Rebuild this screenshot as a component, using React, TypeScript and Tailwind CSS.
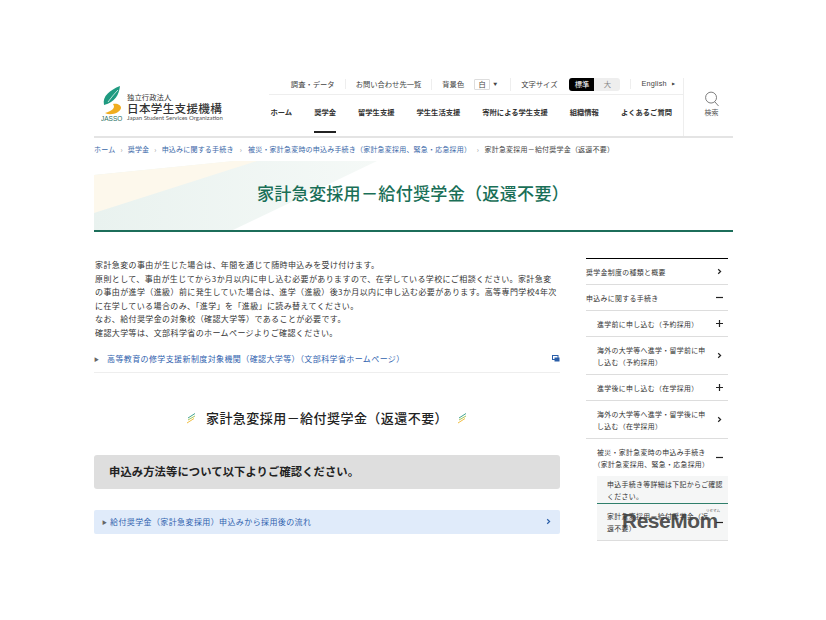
import React from "react";

const FONT = { fontFamily: '"Noto Sans CJK JP", "Noto Sans", sans-serif' };

const navItems = ["ホーム", "奨学金", "留学生支援", "学生生活支援", "寄附による学生支援", "組織情報", "よくあるご質問"];

const Chevron = ({ className = "" }: { className?: string }) => (
  <svg width="7" height="7" viewBox="0 0 7 7" className={className}>
    <path d="M2.2 1.2 L4.6 3.5 L2.2 5.8" fill="none" stroke="currentColor" strokeWidth="1.2" />
  </svg>
);

const Plus = () => (
  <svg width="7" height="7" viewBox="0 0 7 7">
    <path d="M0 3.5 H7 M3.5 0 V7" stroke="#222" strokeWidth="1.2" />
  </svg>
);

const Minus = () => (
  <svg width="7" height="7" viewBox="0 0 7 7">
    <path d="M0 3.5 H7" stroke="#222" strokeWidth="1.2" />
  </svg>
);

const Slash = () => (
  <svg width="11" height="12" viewBox="0 0 11 12">
    <path d="M2 6 L9 1.5" stroke="#2f9a86" strokeWidth="0.9" />
    <path d="M2 8 L9 4" stroke="#9cc04a" strokeWidth="0.9" />
    <path d="M1 11 L8 6.5" stroke="#efb52c" strokeWidth="0.9" />
  </svg>
);

const Logo = () => (
  <svg width="24" height="36" viewBox="0 0 24 36">
    <path d="M3 19 C1 10 9 4 19 0 C18 9 14 16 3 19 Z" fill="#1f9a80" />
    <path d="M7 16 C10 12 13 8 17 4" stroke="#fff" strokeWidth="0.7" fill="none" />
    <path d="M12 18 C15 22 11 25 4 27 C10 30 19 27 20 22 C20 19 16 17 12 18 Z" fill="#f0ad1f" />
    <text x="0" y="35" fontSize="6.5" fill="#2a6f62" fontFamily="Liberation Sans, sans-serif">JASSO</text>
  </svg>
);

const SideRow = ({
  text,
  icon,
  indent = false,
}: {
  text: React.ReactNode;
  icon: React.ReactNode;
  indent?: boolean;
}) => (
  <div
    className={`flex items-center justify-between border-b border-[#ddd] py-[6.5px] pr-[5px] text-[6.9px] leading-[12px] tracking-[0.35px] text-[#333] ${
      indent ? "pl-[11px]" : ""
    }`}
  >
    <div className="w-[112px]">{text}</div>
    {icon}
  </div>
);

export default function App() {
  return (
    <div className="h-[620px] w-[826px] overflow-hidden bg-white pt-[78px]" style={FONT}>
      <div className="ml-[94px] w-[639px]">
        {/* header */}
        <header className="flex h-[58px]">
          <div className="flex w-[175px] items-start pl-[7px] pt-[8px]">
            <Logo />
            <div className="ml-[2px] pt-[6px]">
              <div className="text-[7.4px] leading-[10px] text-[#333]">独立行政法人</div>
              <div className="text-[11.6px] font-medium leading-[12px] tracking-[0.3px] text-[#333]">日本学生支援機構</div>
              <div className="whitespace-nowrap text-[6px] leading-[8px] text-[#555]" style={{ fontFamily: '"Lato", sans-serif' }}>
                Japan Student Services Organization
              </div>
            </div>
          </div>
          <div className="flex w-[414px] flex-col">
            <div className="flex h-[17px] items-center justify-end border-b border-[#eee] pb-[4px] text-[7.3px] text-[#444]">
              <span className="whitespace-nowrap pr-[10px]">調査・データ</span>
              <span className="whitespace-nowrap border-l border-[#eee] pl-[10px] pr-[10px]">お問い合わせ先一覧</span>
              <div className="flex items-center whitespace-nowrap border-l border-[#eee] pl-[10px] pr-[13px]">
                背景色
                <span className="ml-[10px] flex h-[11px] w-[16px] items-center justify-center rounded-[1px] border border-[#ddd]">白</span>
                <span className="ml-[3px] text-[4px]">▼</span>
              </div>
              <div className="flex items-center whitespace-nowrap border-l border-[#eee] pl-[10px] pr-[10px]">
                文字サイズ
                <span className="ml-[12px] flex h-[13px] w-[25px] items-center justify-center rounded-l-[3px] bg-black text-white">標準</span>
                <span className="flex h-[13px] w-[26px] items-center justify-center rounded-r-[3px] bg-[#eee] text-[#888]">大</span>
              </div>
              <span
                className="flex items-center whitespace-nowrap border-l border-[#eee] pl-[10px] pr-[8px] tracking-[0.2px]"
                style={{ fontFamily: '"Liberation Sans", sans-serif' }}
              >
                English<span className="ml-[5px] text-[4px]">▶</span>
              </span>
            </div>
            <nav className="flex flex-1 items-stretch justify-end gap-[22px] pr-[11px]">
              {navItems.map((item, i) => (
                <div
                  key={item}
                  className={`mb-[3px] flex items-center whitespace-nowrap border-b-2 pb-[1px] text-[7.3px] font-bold text-[#333] ${
                    i === 1 ? "border-[#222]" : "border-transparent"
                  }`}
                >
                  {item}
                </div>
              ))}
            </nav>
          </div>
          <div className="flex w-[50px] flex-col items-center border-l border-[#eee] pl-[6px] pt-[13px]">
            <svg width="16" height="16" viewBox="0 0 16 17">
              <circle cx="7" cy="7" r="5.8" fill="none" stroke="#666" strokeWidth="0.9" />
              <path d="M11 11.5 L15 16" stroke="#666" strokeWidth="0.9" />
            </svg>
            <span className="text-[7px] leading-[10px] text-[#555]">検索</span>
          </div>
        </header>
        <div className="h-[2px] w-[639px] bg-[#e4e4e4]" />

        {/* breadcrumb */}
        <div className="flex h-[23px] items-center whitespace-nowrap text-[7px] tracking-[0.2px] text-[#3a68a8]">
          <span>ホーム</span>
          <span className="mx-[5px] text-[#999]">›</span>
          <span>奨学金</span>
          <span className="mx-[5px] text-[#999]">›</span>
          <span>申込みに関する手続き</span>
          <span className="mx-[6px] text-[#999]">›</span>
          <span>被災・家計急変時の申込み手続き（家計急変採用、緊急・応急採用）</span>
          <span className="mx-[5.5px] text-[#999]">›</span>
          <span className="text-[#444]">家計急変採用－給付奨学金（返還不要）</span>
        </div>

        {/* hero */}
        <div className="relative flex h-[71px] items-center justify-center border-b-2 border-[#1c6e5a]">
          <svg className="absolute inset-0" width="639" height="69" viewBox="0 0 639 69">
            <defs>
              <linearGradient id="heroFade" x1="0" y1="0" x2="1" y2="0">
                <stop offset="0" stopColor="#e9f2ef" />
                <stop offset="1" stopColor="#f5f9f7" />
              </linearGradient>
            </defs>
            <polygon points="0,0 283,0 139,69 0,69" fill="url(#heroFade)" />
            <polygon points="0,14 140,0 0,0" fill="#fff" />
            <polygon points="0,14 140,0 163,0 0,52" fill="#fdf8ec" />
          </svg>
          <h1 className="relative pb-[5px] pr-[1px] text-[17.1px] font-medium tracking-[0.25px] text-[#1a6f57]">家計急変採用－給付奨学金（返還不要）</h1>
        </div>

        {/* content */}
        <div className="mt-[26px] flex items-start justify-between pr-[5px]">
          <main className="w-[466px]">
            <p className="pl-[1px] pr-[2px] text-[8px] leading-[13.6px] tracking-[0.39px] text-[#333]">
              家計急変の事由が生じた場合は、年間を通じて随時申込みを受け付けます。
              <br />
              原則として、事由が生じてから3か月以内に申し込む必要がありますので、在学している学校にご相談ください。家計急変の事由が進学（進級）前に発生していた場合は、進学（進級）後3か月以内に申し込む必要があります。高等専門学校4年次に在学している場合のみ、「進学」を「進級」に読み替えてください。
              <br />
              なお、給付奨学金の対象校（確認大学等）であることが必要です。
              <br />
              確認大学等は、文部科学省のホームページよりご確認ください。
            </p>

            <div className="mt-[8px] flex h-[25px] items-center justify-between border-b border-[#eee] pb-[2px] text-[8px] tracking-[0.39px] text-[#2f62ae]">
              <div className="flex items-center">
                <span className="w-[13px] text-[5px] text-[#666]">▶</span>
                <span>高等教育の修学支援新制度対象機関（確認大学等）（文部科学省ホームページ）</span>
              </div>
              <svg width="8" height="7" viewBox="0 0 8 7">
                <rect x="0.5" y="0.5" width="5.5" height="4" fill="none" stroke="#2a5ea8" />
                <rect x="2.5" y="2.5" width="5" height="4" fill="#2a5ea8" />
              </svg>
            </div>

            <div className="mt-[35px] flex items-center justify-center gap-[9px]">
              <Slash />
              <h2 className="text-[13px] font-medium leading-[20px] tracking-[0.45px] text-[#222]">家計急変採用－給付奨学金（返還不要）</h2>
              <Slash />
            </div>

            <div className="mt-[27px] flex h-[34px] items-center rounded-[3px] bg-[#dedede] pl-[15px] text-[11.3px] font-bold tracking-[0.1px] text-[#222]">
              申込み方法等について以下よりご確認ください。
            </div>

            <div className="mt-[21px] flex h-[24px] items-center justify-between rounded-[2px] bg-[#e0ebfa] px-[8px] text-[8px] tracking-[0.39px] text-[#2f62ae]">
              <div className="flex items-center">
                <span className="w-[8px] text-[5px] text-[#666]">▶</span>
                <span>給付奨学金（家計急変採用）申込みから採用後の流れ</span>
              </div>
              <Chevron className="text-[#2a5ea8]" />
            </div>
          </main>

          {/* side menu */}
          <aside className="relative h-[283px] w-[142px] overflow-hidden border-t border-black">
            <SideRow text="奨学金制度の種類と概要" icon={<Chevron className="text-[#222]" />} />
            <SideRow text="申込みに関する手続き" icon={<Minus />} />
            <SideRow indent text="進学前に申し込む（予約採用）" icon={<Plus />} />
            <SideRow indent text="海外の大学等へ進学・留学前に申し込む（予約採用）" icon={<Chevron className="text-[#222]" />} />
            <SideRow indent text="進学後に申し込む（在学採用）" icon={<Plus />} />
            <SideRow indent text="海外の大学等へ進学・留学後に申し込む（在学採用）" icon={<Chevron className="text-[#222]" />} />
            <div className="flex items-center justify-between py-[6.5px] pl-[11px] pr-[5px] text-[6.9px] leading-[12px] tracking-[0.35px] text-[#333]">
              <div className="w-[112px] whitespace-nowrap">
                被災・家計急変時の申込み手続き
                <br />
                <span className="-ml-[3.5px] inline-block">（家計急変採用、緊急・応急採用）</span>
              </div>
              <Minus />
            </div>
            <div className="ml-[11px] bg-[#f5f6f6]">
              <div className="border-b border-[#2f7f6b] pb-[1px] pl-[10px] pt-[2px] text-[6.9px] leading-[12px] tracking-[0.35px] text-[#333]">
                申込手続き等詳細は下記からご確認ください。
              </div>
              <div className="flex h-[38px] items-center justify-between border-b-2 border-[#ddd] pl-[10px] pr-[5px] text-[6.9px] leading-[12px] tracking-[0.35px] text-[#333]">
                <div className="w-[104px]">家計急変採用－給付奨学金（返還不要）</div>
                <Minus />
              </div>
            </div>
            <div
              className="absolute left-[36px] top-[251px] text-[21px] font-bold leading-[21px] tracking-[-0.5px] text-[#3d3d3d]/90"
              style={{ fontFamily: '"Liberation Sans", sans-serif' }}
            >
              ReseMom
            </div>
            <div className="absolute left-[120px] top-[250px] text-[3.5px] leading-[4px] text-[#555]">リセマム</div>
          </aside>
        </div>
      </div>
    </div>
  );
}
